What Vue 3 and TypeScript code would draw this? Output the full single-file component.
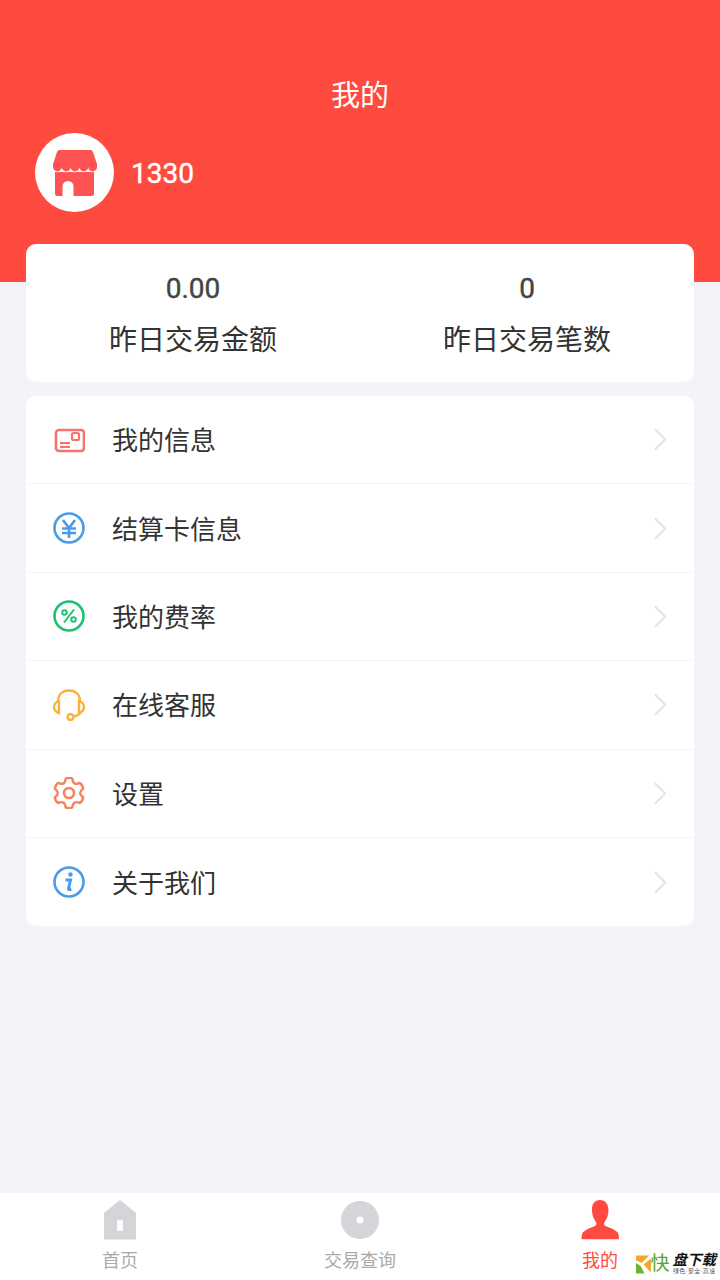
<template>
  <div class="page">
    <header class="hero">
      <h1 class="hero-title">我的</h1>
      <div class="profile">
        <div class="avatar">
          <svg width="44" height="46" viewBox="0 0 44 46">
            <path d="M2 22h39v21.500a2.500 2.500 0 0 1-2.500 2.500h-34A2.500 2.500 0 0 1 2 43.500z" fill="#ff5252" />
            <path d="M9.500 46v-9.500a5.500 5.500 0 0 1 11 0V46z" fill="#fff" />
            <path d="M6.500 0h31a2.500 2.500 0 0 1 2.400 1.800L44 14v3a4.400 4.400 0 0 1-8.800 0 4.400 4.400 0 0 1-8.800 0 4.400 4.400 0 0 1-8.800 0 4.400 4.400 0 0 1-8.800 0A4.400 4.400 0 0 1 0 17v-3L4.100 1.800A2.500 2.500 0 0 1 6.500 0z" fill="#ff5252" stroke="#fff" stroke-width="1.600" paint-order="stroke" />
          </svg>
        </div>
        <span class="phone">1330</span>
      </div>
    </header>

    <main class="content">
      <section class="stats">
        <div v-for="stat in stats" :key="stat.label" class="stat">
          <div class="stat-value">{{ stat.value }}</div>
          <div class="stat-label">{{ stat.label }}</div>
        </div>
      </section>

      <ul class="menu">
        <li class="menu-row">
          <svg class="menu-icon" viewBox="0 0 32 32" fill="none" stroke="#f9716c" stroke-width="2.600">
            <rect x="3" y="6" width="28" height="21" rx="3" />
            <rect x="19" y="9" width="7" height="7" rx="1.500" stroke-width="2.200" />
            <path d="M7 19h10M7 23h10" stroke-width="2" />
          </svg>
          <span class="menu-label">我的信息</span>
          <svg class="chevron" viewBox="0 0 16 26" fill="none" stroke="#e2e2e2" stroke-width="2"><path d="M2 2l11 11L2 24" /></svg>
        </li>
        <li class="menu-row">
          <svg class="menu-icon" viewBox="0 0 32 32" fill="none" stroke="#4a9bea" stroke-width="2.600">
            <circle cx="16" cy="16" r="14.500" />
            <path d="M10 8l6 8 6-8M9 16.500h14M9 21h14M16 16v10" />
          </svg>
          <span class="menu-label">结算卡信息</span>
          <svg class="chevron" viewBox="0 0 16 26" fill="none" stroke="#e2e2e2" stroke-width="2"><path d="M2 2l11 11L2 24" /></svg>
        </li>
        <li class="menu-row">
          <svg class="menu-icon" viewBox="0 0 32 32" fill="none" stroke="#1fbf74" stroke-width="2.600">
            <circle cx="16" cy="16" r="14.500" />
            <circle cx="11.500" cy="12.500" r="2.300" stroke-width="2" />
            <circle cx="20.500" cy="19.500" r="2.300" stroke-width="2" />
            <path d="M21 9.500l-10 13" stroke-width="2" />
          </svg>
          <span class="menu-label">我的费率</span>
          <svg class="chevron" viewBox="0 0 16 26" fill="none" stroke="#e2e2e2" stroke-width="2"><path d="M2 2l11 11L2 24" /></svg>
        </li>
        <li class="menu-row">
          <svg class="menu-icon" viewBox="0 0 32 32" fill="none" stroke="#fbb23a" stroke-width="2.400">
            <path d="M5 12C5 5 10 1.500 16 1.500S27 5 27 12" />
            <path d="M6 12C2.500 13 1 16 1 18c0 3 2 5 5 6zM26 12c3.500 1 5 4 5 6 0 3-2 5-5 6z" />
            <path d="M27 24c-1 2-3 3-6 3.500" />
            <circle cx="17.500" cy="28" r="3" />
          </svg>
          <span class="menu-label">在线客服</span>
          <svg class="chevron" viewBox="0 0 16 26" fill="none" stroke="#e2e2e2" stroke-width="2"><path d="M2 2l11 11L2 24" /></svg>
        </li>
        <li class="menu-row">
          <svg class="menu-icon" viewBox="0 0 32 32" fill="none" stroke="#f5835c" stroke-width="2.400">
            <path :d="gearPath" stroke-linejoin="round" />
            <circle cx="16" cy="16" r="5" stroke-width="2.600" />
          </svg>
          <span class="menu-label">设置</span>
          <svg class="chevron" viewBox="0 0 16 26" fill="none" stroke="#e2e2e2" stroke-width="2"><path d="M2 2l11 11L2 24" /></svg>
        </li>
        <li class="menu-row">
          <svg class="menu-icon" viewBox="0 0 32 32" fill="none" stroke="#4a9bea" stroke-width="2.600">
            <circle cx="16" cy="16" r="14.500" />
            <circle cx="17.500" cy="8.500" r="2.200" fill="#4a9bea" stroke="none" />
            <path d="M12.500 14h5l-2 8.500c-.2 1 .5 1.500 2.800.5" stroke-width="3" />
          </svg>
          <span class="menu-label">关于我们</span>
          <svg class="chevron" viewBox="0 0 16 26" fill="none" stroke="#e2e2e2" stroke-width="2"><path d="M2 2l11 11L2 24" /></svg>
        </li>
      </ul>
    </main>

    <nav class="tabbar">
      <div class="tab">
        <svg width="34" height="40" viewBox="0 0 34 40">
          <path d="M17 0L33 13v26.500H1V13z" fill="#d4d4d9" />
          <rect x="14" y="20" width="6" height="11" rx="1" fill="#fff" />
        </svg>
        <span class="tab-label">首页</span>
      </div>
      <div class="tab">
        <svg width="38" height="40" viewBox="0 0 38 40">
          <circle cx="19" cy="20" r="19" fill="#d4d4d9" />
          <circle cx="19" cy="20" r="3.500" fill="#fff" />
        </svg>
        <span class="tab-label">交易查询</span>
      </div>
      <div class="tab tab-active">
        <svg width="38" height="40" viewBox="0 0 38 40">
          <path d="M19 0c5.500 0 8.500 4.500 8.500 10.500 0 5-2 9-4.200 12-.8 1.500 0 3 1.700 3.700 4 1.500 9 3.300 11.500 6 1.200 1.500 1.500 4.500 1.500 7H.5c0-2.500.3-5.500 1.500-7 2.500-2.700 7.500-4.500 11.500-6 1.700-.7 2.500-2.200 1.700-3.700-2.200-3-4.200-7-4.200-12C10.500 4.500 13.500 0 19 0z" fill="#ff4a40" />
        </svg>
        <span class="tab-label">我的</span>
      </div>
    </nav>

    <div class="watermark">
      <svg width="15" height="19" viewBox="0 0 16 19">
        <path d="M0 0h14L6 8 0 5z" fill="#f5a623" />
        <path d="M8 9.500L16 3v15z" fill="#f5a623" />
        <path d="M0 8l5 3 4 8H0z" fill="#6ab42d" />
      </svg>
      <span class="wm-kuai">快</span>
      <div class="wm-text">
        <span class="wm-name">盘下载</span>
        <span class="wm-sub">绿色·安全·高速</span>
      </div>
    </div>
  </div>
</template>

<script setup lang="ts">
interface Stat {
  value: string
  label: string
}

const stats: Stat[] = [
  { value: '0.00', label: '昨日交易金额' },
  { value: '0', label: '昨日交易笔数' },
]

// 六齿齿轮，齿朝上下和四个斜向
const polar = (r: number, deg: number): string => {
  const a = (deg * Math.PI) / 180
  return `${(16 + r * Math.cos(a)).toFixed(2)} ${(16 + r * Math.sin(a)).toFixed(2)}`
}

const gearPath = [0, 1, 2, 3, 4, 5]
  .map((k) => {
    const a = k * 60 - 90
    const start = `${k === 0 ? 'M' : 'L'}${polar(14.8, a - 13)}`
    return `${start} Q${polar(16, a)} ${polar(14.8, a + 13)} Q${polar(8, a + 30)} ${polar(14.8, a + 47)}`
  })
  .join(' ') + 'Z'
</script>

<style>
html,
body {
  margin: 0;
  background: #f3f4f8;
}
</style>

<style scoped>
.page {
  position: relative;
  display: flex;
  flex-direction: column;
  height: 1280px;
  overflow: hidden;
  background: #f3f4f8;
  font-family: "Liberation Sans", "Noto Sans CJK SC", sans-serif;
}

.hero {
  height: 282px;
  box-sizing: border-box;
  padding: 76px 35px 0;
  background: #ff4a40;
  color: #fff;
}

.hero-title {
  margin: 0;
  height: 40px;
  font-size: 29px;
  line-height: 40px;
  font-weight: 400;
  text-align: center;
}

.profile {
  display: flex;
  align-items: center;
  gap: 17px;
  margin-top: 17px;
}

.avatar {
  display: flex;
  align-items: center;
  justify-content: center;
  width: 79px;
  height: 79px;
  border-radius: 50%;
  background: #fff;
}

.phone {
  padding-top: 3px;
  font-family: Roboto, "Liberation Sans", sans-serif;
  font-size: 28px;
  line-height: 42px;
  -webkit-text-stroke: 0.4px #fff;
}

.content {
  flex: 1;
  margin-top: -38px;
  padding: 0 26px;
}

.stats {
  display: grid;
  grid-template-columns: 1fr 1fr;
  height: 138px;
  border-radius: 10px;
  background: #fff;
}

.stat {
  text-align: center;
  padding-top: 25px;
}

.stat-value {
  height: 40px;
  font-family: Roboto, "Liberation Sans", sans-serif;
  font-size: 28px;
  line-height: 40px;
  color: #444;
  -webkit-text-stroke: 0.4px #444;
}

.stat-label {
  margin-top: 12px;
  font-size: 28px;
  line-height: 40px;
  color: #333;
}

.menu {
  margin: 14px 0 0;
  padding: 0;
  list-style: none;
  border-radius: 10px;
  background: #fff;
}

.menu-row {
  display: flex;
  align-items: center;
  height: 88.4px;
  box-sizing: border-box;
  padding: 0 26px 0 27px;
  border-bottom: 1px solid #f4f4f6;
}

.menu-row:last-child {
  border-bottom: 0;
}

.menu-icon {
  width: 32px;
  height: 32px;
}

.menu-label {
  flex: 1;
  margin-left: 27px;
  padding-bottom: 2px;
  font-size: 26px;
  color: #333;
}

.chevron {
  width: 15px;
  height: 25px;
}

.tabbar {
  display: grid;
  grid-template-columns: repeat(3, 1fr);
  height: 87px;
  background: #fff;
}

.tab {
  display: flex;
  flex-direction: column;
  align-items: center;
  padding-top: 7px;
}

.tab-label {
  margin-top: 8px;
  font-size: 18px;
  line-height: 26px;
  color: #aaa;
}

.tab-active .tab-label {
  color: #ff4a40;
}

/* 水印，盖在右下角 */
.watermark {
  position: absolute;
  right: 4px;
  bottom: 5px;
  display: flex;
  align-items: center;
  background: #fff;
}

.wm-kuai {
  margin-left: -1px;
  font-size: 19px;
  line-height: 22px;
  color: #5aa51f;
}

.wm-text {
  display: flex;
  flex-direction: column;
  align-items: center;
  margin-left: 3px;
}

.wm-name {
  font-size: 14.500px;
  line-height: 15px;
  font-weight: 700;
  font-style: italic;
  color: #111;
}

.wm-sub {
  font-size: 6px;
  line-height: 7px;
  letter-spacing: 0.3px;
  color: #555;
}
</style>
